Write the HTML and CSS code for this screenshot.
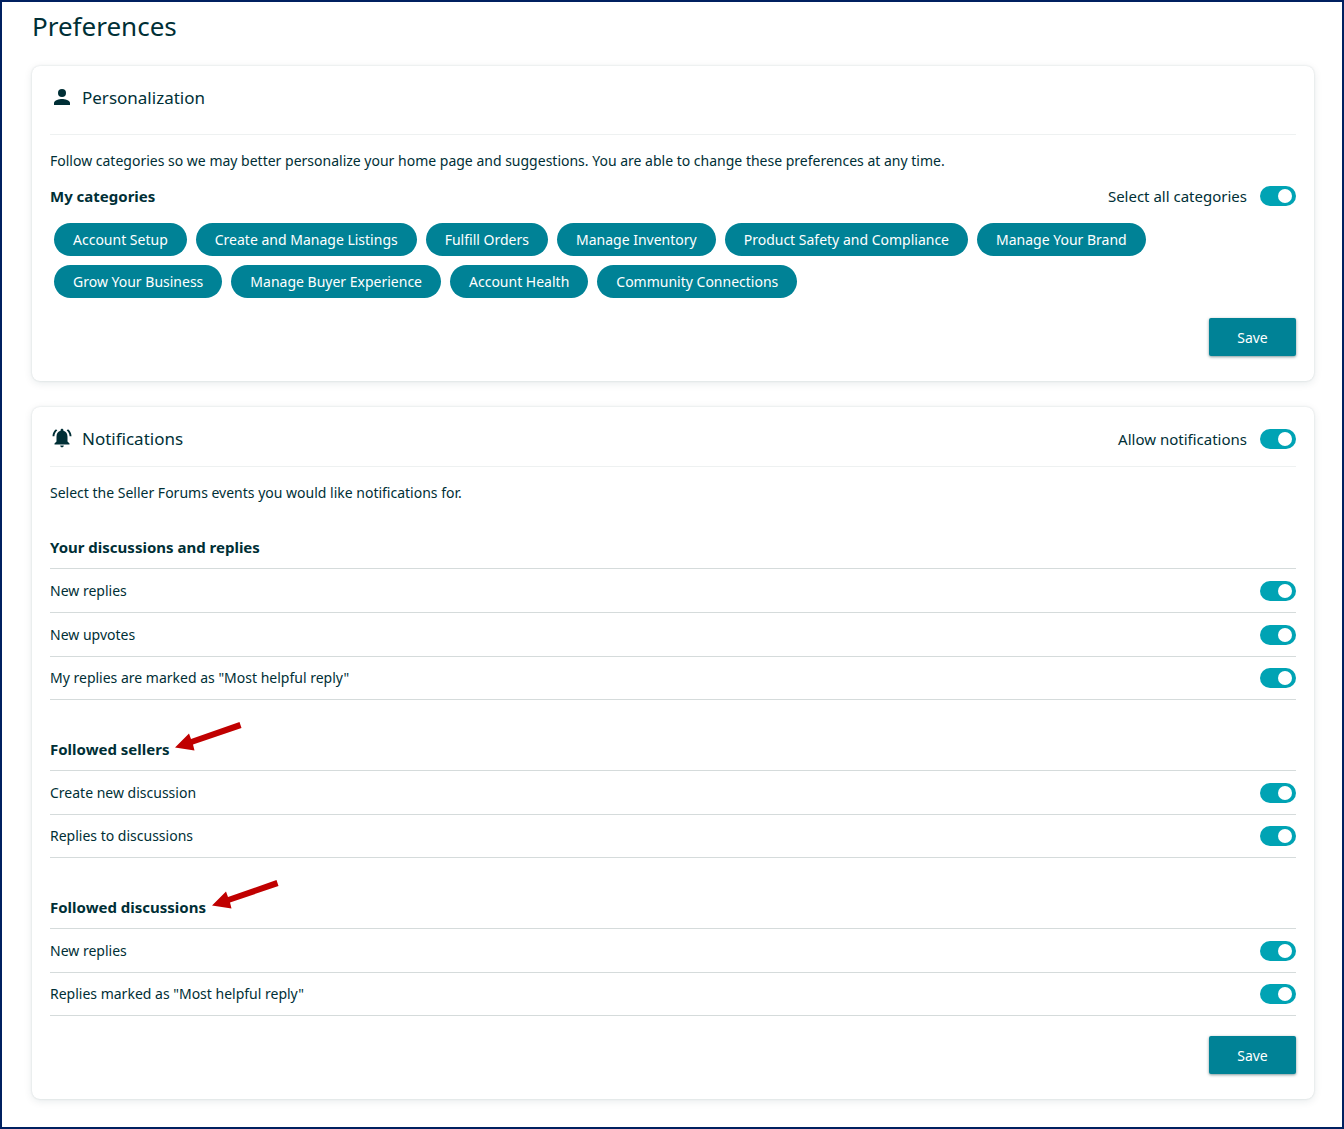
FILE: index.html
```html
<!DOCTYPE html>
<html lang="en">

<head>
    <meta charset="UTF-8">
    <meta name="viewport" content="width=device-width, initial-scale=1.0">
    <title>Preferences</title>
    <link rel="stylesheet" href="styles.css">
</head>

<body>
    <main class="page">
        <h1>Preferences</h1>

        <section class="card">
            <header class="card-header tall">
                <svg class="icon" viewBox="0 0 24 24" aria-hidden="true">
                    <circle cx="12" cy="8" r="4" />
                    <path d="M12 14c-2.7 0-8 1.3-8 4v2h16v-2c0-2.7-5.3-4-8-4z" />
                </svg>
                <h2>Personalization</h2>
            </header>
            <p>Follow categories so we may better personalize your home page and suggestions. You are able to change these preferences at any time.</p>
            <div class="row categories-header">
                <h3>My categories</h3>
                <label class="switch-label">Select all categories <input type="checkbox" class="switch" checked></label>
            </div>
            <div class="chips">
                <button type="button" class="chip">Account Setup</button>
                <button type="button" class="chip">Create and Manage Listings</button>
                <button type="button" class="chip">Fulfill Orders</button>
                <button type="button" class="chip">Manage Inventory</button>
                <button type="button" class="chip">Product Safety and Compliance</button>
                <button type="button" class="chip">Manage Your Brand</button>
                <button type="button" class="chip">Grow Your Business</button>
                <button type="button" class="chip">Manage Buyer Experience</button>
                <button type="button" class="chip">Account Health</button>
                <button type="button" class="chip">Community Connections</button>
            </div>
            <div class="actions">
                <button type="button" class="save">Save</button>
            </div>
        </section>

        <section class="card">
            <header class="card-header">
                <svg class="icon" viewBox="0 0 24 24" aria-hidden="true">
                    <path d="M7.3 4.6 6 3.3C3.9 4.9 2.6 7.4 2.5 10.2h1.9c.1-2.3 1.2-4.3 2.9-5.6zM19.6 10.2h1.9c-.1-2.800-1.400-5.300-3.500-6.900l-1.300 1.300c1.700 1.300 2.800 3.300 2.900 5.600zM17.500 10.700c0-3-1.500-5.300-4.100-5.900V4.200c0-.8-.6-1.400-1.400-1.400s-1.400.6-1.400 1.400v.6C8 5.400 6.500 7.700 6.500 10.700V15.500L4.500 17.400v1h15v-1l-2-1.900zM12 21.200c1 0 1.800-.8 1.800-1.800h-3.600c0 1 .8 1.800 1.800 1.800z" />
                </svg>
                <h2>Notifications</h2>
                <label class="switch-label">Allow notifications <input type="checkbox" class="switch" checked></label>
            </header>
            <p>Select the Seller Forums events you would like notifications for.</p>

            <div class="groups">
                <div class="group">
                    <h3>Your discussions and replies</h3>
                    <label class="row option">New replies <input type="checkbox" class="switch" checked></label>
                    <label class="row option">New upvotes <input type="checkbox" class="switch" checked></label>
                    <label class="row option">My replies are marked as "Most helpful reply" <input type="checkbox" class="switch" checked></label>
                </div>

                <div class="group">
                    <h3><span class="marked">Followed sellers
                        <svg class="arrow" viewBox="0 0 67 29" aria-hidden="true">
                            <path d="M0 25.5 14 11.5 16 17 64.5 0 66.5 6 18 22.5 19.5 28.5z" />
                        </svg></span></h3>
                    <label class="row option">Create new discussion <input type="checkbox" class="switch" checked></label>
                    <label class="row option">Replies to discussions <input type="checkbox" class="switch" checked></label>
                </div>

                <div class="group">
                    <h3><span class="marked">Followed discussions
                        <svg class="arrow" viewBox="0 0 67 29" aria-hidden="true">
                            <path d="M0 25.5 14 11.5 16 17 64.5 0 66.5 6 18 22.5 19.5 28.5z" />
                        </svg></span></h3>
                    <label class="row option">New replies <input type="checkbox" class="switch" checked></label>
                    <label class="row option">Replies marked as "Most helpful reply" <input type="checkbox" class="switch" checked></label>
                </div>
            </div>

            <div class="actions">
                <button type="button" class="save">Save</button>
            </div>
        </section>
    </main>
</body>

</html>
```
FILE: styles.css
```css
* {
    box-sizing: border-box;
}

body {
    margin: 0;
    min-height: 100vh;
    border: 2px solid #002060;
    background-color: #fff;
    color: #002f36;
    font-family: "Noto Sans", "Open Sans", sans-serif;
    font-size: 14px;
    line-height: 20px;
}

h1,
h2,
h3,
p {
    margin: 0;
}

.page {
    padding: 7px 28px 26px 30px;
}

h1 {
    font-size: 26px;
    font-weight: 400;
    line-height: 34px;
    margin-bottom: 23px;
}

h2 {
    font-size: 17px;
    font-weight: 400;
    line-height: 24px;
}

h3 {
    font-size: 15px;
    font-weight: 700;
    line-height: 20px;
}

.card {
    padding: 0 18px 25px;
    border-radius: 8px;
    box-shadow: 0 0 2px rgba(0, 47, 54, 0.16), 0 2px 8px rgba(0, 47, 54, 0.1);
}

.card + .card {
    margin-top: 26px;
}

.card-header {
    display: flex;
    align-items: center;
    gap: 8px;
    height: 60px;
    padding-top: 4px;
    margin-bottom: 16px;
    border-bottom: 1px solid #eef1f1;
}

.card-header.tall {
    height: 69px;
    padding-top: 0;
    padding-bottom: 4px;
}

.icon {
    width: 24px;
    height: 24px;
    margin-bottom: 2px;
    fill: #002f36;
}

.row {
    display: flex;
    align-items: center;
    justify-content: space-between;
}

.switch-label {
    display: flex;
    align-items: center;
    gap: 13px;
    margin-left: auto;
    font-size: 15px;
}

.switch {
    appearance: none;
    display: flex;
    align-items: center;
    width: 36px;
    height: 20px;
    margin: 0;
    padding: 0 4px;
    border-radius: 10px;
    background-color: #b0b9ba;
    cursor: pointer;
}

.switch::before {
    content: "";
    width: 14px;
    height: 14px;
    border-radius: 50%;
    background-color: #fff;
}

.switch:checked {
    justify-content: flex-end;
    background-color: #00a3b4;
}

.categories-header {
    margin: 15px 0 17px;
}

.chips {
    display: flex;
    flex-wrap: wrap;
    gap: 9px;
    padding: 0 4px;
}

button {
    border: none;
    background-color: #008296;
    color: #fff;
    font-family: inherit;
    font-size: 14px;
    cursor: pointer;
}

.chip {
    height: 33px;
    padding: 0 19px;
    border-radius: 17px;
}

.actions {
    display: flex;
    justify-content: flex-end;
    margin-top: 20px;
}

.save {
    width: 87px;
    height: 38px;
    border-radius: 2px;
    box-shadow: 0 1px 3px rgba(0, 47, 54, 0.5);
}

.groups {
    display: flex;
    flex-direction: column;
    gap: 28px;
    margin-top: 23px;
}

.group h3 {
    height: 42px;
    padding-top: 11px;
}

.option {
    height: 44px;
    border-top: 1px solid #d5dbdb;
    cursor: pointer;
}

.option:last-child {
    border-bottom: 1px solid #d5dbdb;
}

.marked {
    position: relative;
}

/* Pointer drawn beside the heading */
.arrow {
    position: absolute;
    left: 100%;
    bottom: 8px;
    width: 67px;
    height: 29px;
    margin-left: 6px;
    fill: #c00000;
}
```
